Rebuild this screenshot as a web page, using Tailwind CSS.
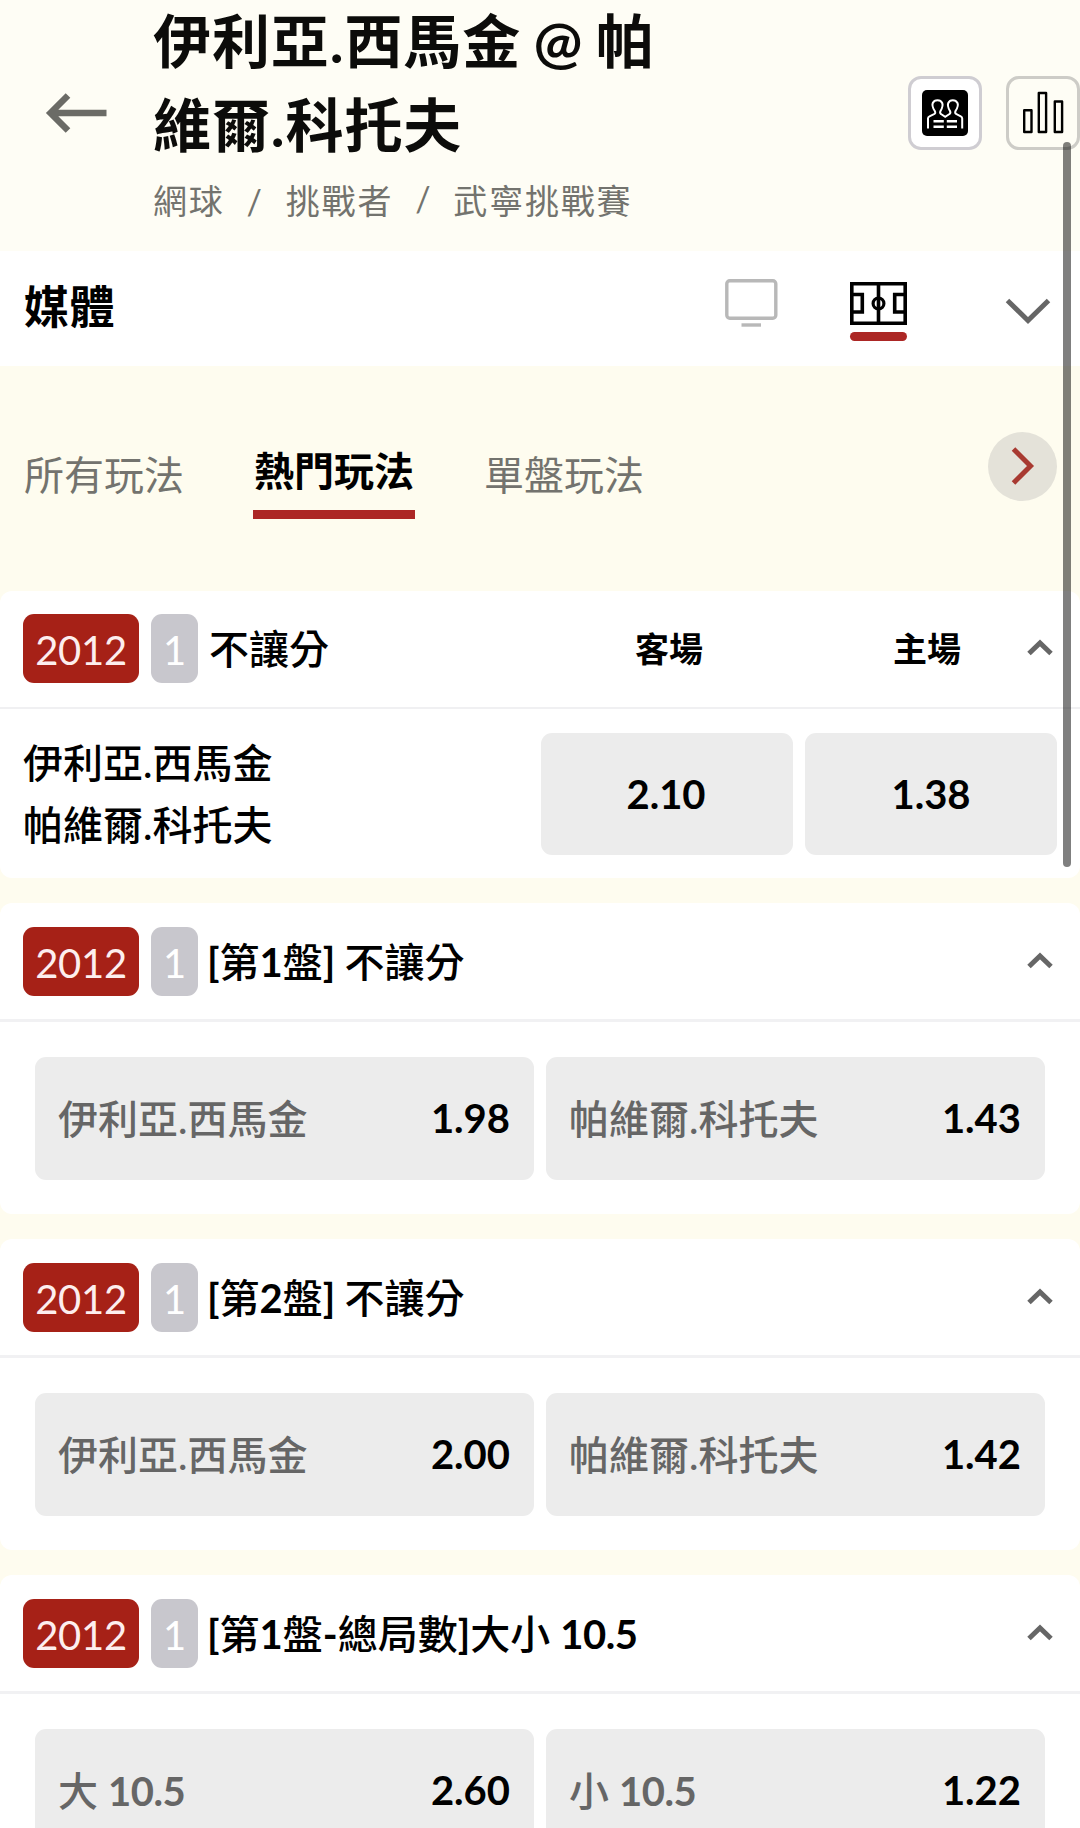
<!DOCTYPE html>
<html lang="zh-Hant">
<head>
<meta charset="utf-8">
<title>伊利亞.西馬金 @ 帕維爾.科托夫</title>
<script src="https://cdn.jsdelivr.net/npm/@tailwindcss/browser@4"></script>
</head>
<body class="relative h-[1828px] overflow-hidden bg-[#fefcef] font-[Lato,'Noto_Sans_CJK_TC',sans-serif] text-[40px] text-black">

<header class="flex h-[251px] bg-[#fefdf5]">
  <svg class="ml-[44px] mt-[91px] h-[44px] w-[64px] shrink-0" viewBox="0 0 64 44" fill="none" stroke="#6b6b66" stroke-width="6.5"><path d="M24 4.500L6.500 22L24 39.500M6 22H62.500"/></svg>
  <div class="ml-[45px] w-[520px] shrink-0">
    <h1 class="-mt-px h-[167px] whitespace-nowrap text-[58px] font-bold leading-[83.500px] tracking-[0.900px] text-[#0c0c0a] [word-spacing:-2.500px]">伊利亞.西馬金 @ 帕<br>維爾.科托夫</h1>
    <nav class="flex h-[70px] items-center whitespace-nowrap text-[34px] leading-[72px] tracking-[1.800px] text-[#73736e]">
      <span>網球</span><span class="ml-[22px] pt-[2px]">/</span><span class="ml-[22px]">挑戰者</span><span class="ml-[22px] pb-[4px]">/</span><span class="ml-[21px]">武寧挑戰賽</span>
    </nav>
  </div>
  <button class="ml-[235px] mt-[76px] flex size-[74px] shrink-0 items-center justify-center rounded-[13px] border-[3px] border-[#cfcdd2] bg-white">
    <svg class="size-[46px]" viewBox="0 0 46 46" fill="none" stroke="#fff" stroke-width="2"><rect width="46" height="46" rx="5" fill="#000" stroke="none"/><path d="M6 38.500V28.500Q6 27 7.500 26.300L12 24.200Q14 23.200 12.800 21Q9.500 16 10.800 13Q12 10.200 15.500 10.200T20.200 13Q21.500 16 18.500 21Q17.500 23.200 19 24L23.200 26.800L27.500 24Q29 23.200 28 21Q25 16 26.300 13Q27.500 10.200 30.800 10.200T35.500 13Q36.800 16 33.500 21Q32.500 23.200 34.500 24.200L38.800 26.300Q40.200 27 40.200 28.500V38.500"/><path d="M11.500 31.300H21.800M24.800 31.300H35M11.500 36.800H21.800M24.800 36.800H35" stroke-width="2.400"/></svg>
  </button>
  <button class="ml-[24px] mt-[76px] flex size-[74px] shrink-0 items-center justify-center rounded-[13px] border-[3px] border-[#cdccc7]">
    <svg class="h-[44px] w-[43px]" viewBox="0 0 43 44" fill="none" stroke="#000" stroke-width="2.400" stroke-linejoin="round"><path d="M2.200 19.200h7.300v21.800h-7.300zM16.800 2h7.300v39h-7.300zM32.800 10.500h7.300v30.500h-7.300z"/></svg>
  </button>
</header>

<section class="flex h-[115px] items-start bg-white">
  <h2 class="ml-[24px] w-[700px] text-[45px] font-bold leading-[113px] tracking-[0.500px]">媒體</h2>
  <svg class="mt-[27px] h-[50px] w-[54px]" viewBox="0 0 54 50" fill="none" stroke="#b8b8b8" stroke-width="3.400"><rect x="2.800" y="2.800" width="49" height="37.500" rx="3"/><path d="M17.500 47H37"/></svg>
  <div class="ml-[72px] mt-[31px] flex w-[57px] flex-col">
    <svg class="h-[43px] w-[57px]" viewBox="0 0 57 43" fill="none" stroke="#000" stroke-width="3.600"><path d="M1.800 1.800H55.200V41.200H1.800zM28.500 2V41M2 12.500H12.300V30H2M55 12.500H44.700V30H55"/><circle cx="28.500" cy="21.500" r="5.400" stroke-width="3.200"/></svg>
    <span class="mt-[7px] h-[9px] rounded-full bg-[#ac2725]"></span>
  </div>
  <svg class="ml-[98px] mt-[46px] h-[28px] w-[46px]" viewBox="0 0 46 28" fill="none" stroke="#666" stroke-width="5"><path d="M2.500 3.500L23 23.500L43.500 3.500"/></svg>
</section>

<nav class="flex h-[225px] whitespace-nowrap pl-[24px]">
  <span class="mt-[79px] w-[229px] leading-[61px] text-[#73736e]">所有玩法</span>
  <span class="mt-[75px] h-[78px] w-[162px] border-b-[9px] border-[#ac2725] text-center font-bold leading-[60px]">熱門玩法</span>
  <span class="ml-[69px] mt-[79px] w-[504px] leading-[61px] text-[#73736e]">單盤玩法</span>
  <button class="mt-[66px] flex size-[69px] shrink-0 items-center justify-center rounded-full bg-[#e4e2d9]">
    <svg class="h-[40px] w-[26px]" viewBox="0 0 26 40" fill="none" stroke="#a83a31" stroke-width="5"><path d="M3.500 2L20.500 19L3.500 36"/></svg>
  </button>
</nav>

<main class="flex flex-col gap-[25px]">
  <article class="h-[287px] rounded-[12px] bg-white">
    <div class="flex h-[118px] items-start border-b-[2px] border-[#f0f0f2] pl-[23px] pt-[23px]">
      <span class="h-[69px] w-[116px] rounded-[11px] bg-[#a62117] text-center leading-[73px] tracking-[-0.300px] text-[#fdeeee]">2012</span>
      <span class="ml-[12px] h-[69px] w-[47px] rounded-[11px] bg-[#c8c7cd] text-center leading-[73px] text-white">1</span>
      <span class="ml-[11px] w-[380px] font-medium leading-[71px]">不讓分</span>
      <span class="ml-[46px] w-[70px] text-[34px] font-bold leading-[70px]">客場</span>
      <span class="ml-[188px] w-[70px] text-[34px] font-bold leading-[70px]">主場</span>
      <svg class="ml-[63px] mt-[24px] h-[20px] w-[28px]" viewBox="0 0 28 20" fill="none" stroke="#666" stroke-width="5"><path d="M3 15.500L14 5L25 15.500"/></svg>
    </div>
    <div class="flex pl-[23px] pt-[24px]">
      <div class="w-[518px] font-medium leading-[61.500px]">伊利亞.西馬金<br>帕維爾.科托夫</div>
      <button class="h-[122px] w-[252px] rounded-[11px] bg-[#ececec] pr-[2px] font-bold">2.10</button>
      <button class="ml-[12px] h-[122px] w-[252px] rounded-[11px] bg-[#ececec] font-bold">1.38</button>
    </div>
  </article>

  <article class="h-[311px] rounded-[12px] bg-white">
    <div class="flex h-[119px] items-start border-b-[3px] border-[#f1f1f3] pl-[23px] pt-[24px]">
      <span class="h-[69px] w-[116px] rounded-[11px] bg-[#a62117] text-center leading-[73px] tracking-[-0.300px] text-[#fdeeee]">2012</span>
      <span class="ml-[12px] h-[69px] w-[47px] rounded-[11px] bg-[#c8c7cd] text-center leading-[73px] text-white">1</span>
      <span class="ml-[9px] w-[819px] font-medium leading-[71px] [word-spacing:-1px]"><b>[</b>第<b>1</b>盤<b>]</b> 不讓分</span>
      <svg class="mt-[24px] h-[20px] w-[28px]" viewBox="0 0 28 20" fill="none" stroke="#666" stroke-width="5"><path d="M3 15.500L14 5L25 15.500"/></svg>
    </div>
    <div class="grid grid-cols-2 gap-[12px] pl-[35px] pr-[35px] pt-[35px]">
      <button class="flex h-[123px] items-center justify-between rounded-[11px] bg-[#ececec] pl-[23px] pr-[24px]"><span class="font-medium text-[#666]">伊利亞.西馬金</span><span class="pb-[2px] font-bold">1.98</span></button>
      <button class="flex h-[123px] items-center justify-between rounded-[11px] bg-[#ececec] pl-[23px] pr-[24px]"><span class="font-medium text-[#666]">帕維爾.科托夫</span><span class="pb-[2px] font-bold">1.43</span></button>
    </div>
  </article>

  <article class="h-[311px] rounded-[12px] bg-white">
    <div class="flex h-[119px] items-start border-b-[3px] border-[#f1f1f3] pl-[23px] pt-[24px]">
      <span class="h-[69px] w-[116px] rounded-[11px] bg-[#a62117] text-center leading-[73px] tracking-[-0.300px] text-[#fdeeee]">2012</span>
      <span class="ml-[12px] h-[69px] w-[47px] rounded-[11px] bg-[#c8c7cd] text-center leading-[73px] text-white">1</span>
      <span class="ml-[9px] w-[819px] font-medium leading-[71px] [word-spacing:-1px]"><b>[</b>第<b>2</b>盤<b>]</b> 不讓分</span>
      <svg class="mt-[24px] h-[20px] w-[28px]" viewBox="0 0 28 20" fill="none" stroke="#666" stroke-width="5"><path d="M3 15.500L14 5L25 15.500"/></svg>
    </div>
    <div class="grid grid-cols-2 gap-[12px] pl-[35px] pr-[35px] pt-[35px]">
      <button class="flex h-[123px] items-center justify-between rounded-[11px] bg-[#ececec] pl-[23px] pr-[24px]"><span class="font-medium text-[#666]">伊利亞.西馬金</span><span class="pb-[2px] font-bold">2.00</span></button>
      <button class="flex h-[123px] items-center justify-between rounded-[11px] bg-[#ececec] pl-[23px] pr-[24px]"><span class="font-medium text-[#666]">帕維爾.科托夫</span><span class="pb-[2px] font-bold">1.42</span></button>
    </div>
  </article>

  <article class="h-[311px] rounded-[12px] bg-white">
    <div class="flex h-[119px] items-start border-b-[3px] border-[#f1f1f3] pl-[23px] pt-[24px]">
      <span class="h-[69px] w-[116px] rounded-[11px] bg-[#a62117] text-center leading-[73px] tracking-[-0.300px] text-[#fdeeee]">2012</span>
      <span class="ml-[12px] h-[69px] w-[47px] rounded-[11px] bg-[#c8c7cd] text-center leading-[73px] text-white">1</span>
      <span class="ml-[9px] w-[819px] font-medium leading-[71px]"><b>[</b>第<b>1</b>盤<b>-</b>總局數<b>]</b>大小 <b class="tracking-[-0.500px]">10.5</b></span>
      <svg class="mt-[24px] h-[20px] w-[28px]" viewBox="0 0 28 20" fill="none" stroke="#666" stroke-width="5"><path d="M3 15.500L14 5L25 15.500"/></svg>
    </div>
    <div class="grid grid-cols-2 gap-[12px] pl-[35px] pr-[35px] pt-[35px]">
      <button class="flex h-[123px] items-center justify-between rounded-[11px] bg-[#ececec] pl-[23px] pr-[24px]"><span class="font-medium text-[#666]">大 <b class="tracking-[-0.500px]">10.5</b></span><span class="pb-[2px] font-bold">2.60</span></button>
      <button class="flex h-[123px] items-center justify-between rounded-[11px] bg-[#ececec] pl-[23px] pr-[24px]"><span class="font-medium text-[#666]">小 <b class="tracking-[-0.500px]">10.5</b></span><span class="pb-[2px] font-bold">1.22</span></button>
    </div>
  </article>
</main>

<!-- overlay scrollbar thumb -->
<div class="absolute left-[1063px] top-[142px] h-[725px] w-[8px] rounded-full bg-black/50"></div>
</body>
</html>
